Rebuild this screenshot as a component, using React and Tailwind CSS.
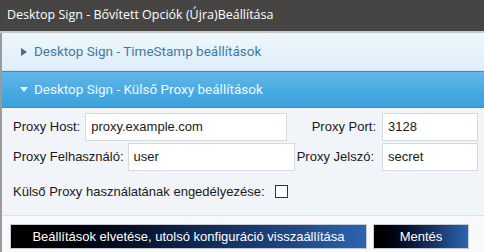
import React from "react";

export default function App() {
  const label = "text-[13px] text-[#1a1a1a] whitespace-nowrap";
  const input =
    "h-[28px] border border-[#d6d9dd] bg-white px-[5px] text-[13px] text-[#1a1a1a] flex items-center";
  return (
    <div className="w-[484px] h-[252px] bg-[#f7f9fb] overflow-hidden flex flex-col" style={{ fontFamily: '"Liberation Sans", Arial, sans-serif' }}>
      <div className="h-[31px] bg-[#474543] flex items-center px-[7px] text-white text-[12.5px] shrink-0" style={{ fontFamily: '"Open Sans", "Noto Sans", sans-serif' }}>
        Desktop Sign - Bővített Opciók (Újra)Beállítása
      </div>
      <div className="h-[2px] bg-[#c9c9c9] shrink-0" />
      <div className="flex flex-col border-l-2 border-[#9a9a9a] ml-0 shrink-0">
        <div className="h-[38px] bg-gradient-to-b from-[#eef7fd] to-[#deeefa] border-b border-[#cfe3f3] flex items-center pl-[19px] shrink-0" style={{ fontFamily: 'Roboto, "Open Sans", sans-serif' }}>
          <svg width="6" height="8" viewBox="0 0 6 8" className="mr-[7px]"><path d="M0 0 L6 4 L0 8 Z" fill="#4d6a86" /></svg>
          <span className="text-[13.5px] text-[#4079a5]">Desktop Sign - TimeStamp beállítások</span>
        </div>
        <div className="h-[37px] bg-gradient-to-b from-[#62b8e8] via-[#4aabe3] to-[#3ba0dc] border-y border-[#3a8ccc] flex items-center pl-[18px] shrink-0" style={{ fontFamily: 'Roboto, "Open Sans", sans-serif' }}>
          <svg width="8" height="6" viewBox="0 0 8 6" className="mr-[6px]"><path d="M0 0 L8 0 L4 5 Z" fill="#eaf6ff" /></svg>
          <span className="text-[13.5px] text-[#eef8ff]">Desktop Sign - Külső Proxy beállítások</span>
        </div>
        <div className="h-[108px] bg-[#f1f4f8] border-b border-[#dfe3e7] pl-[11px] pr-[6px] pt-[5px] flex flex-col gap-[2px]">
          <div className="flex items-center">
            <span className={label}>Proxy Host:</span>
            <div className={`${input} ml-[5px] w-[202px]`}>proxy.example.com</div>
            <span className={`${label} ml-auto mr-[6px]`}>Proxy Port:</span>
            <div className={`${input} w-[96px]`}>3128</div>
          </div>
          <div className="flex items-center">
            <span className={label}>Proxy Felhasználó:</span>
            <div className={`${input} ml-[4px] w-[167px]`}>user</div>
            <span className={`${label} ml-auto mr-[8px]`}>Proxy Jelszó:</span>
            <div className={`${input} w-[96px]`}>secret</div>
          </div>
          <div className="flex items-center mt-[9px]">
            <span className={label}>Külső Proxy használatának engedélyezése:</span>
            <div className="w-[13px] h-[13px] border border-[#333] bg-white ml-[10px]" />
          </div>
        </div>
      </div>
      <div className="flex-1 border-l-2 border-[#9a9a9a] flex items-start pt-[8px] pl-[8px] gap-[6px] bg-[#f7f9fb]">
        <div className="h-[25px] w-[357px] border border-[#c8ccd2] bg-gradient-to-r from-[#000000] via-[#10244a] to-[#2c64b0] text-white text-[13px] flex items-center justify-center">
          Beállítások elvetése, utolsó konfiguráció visszaállítása
        </div>
        <div className="h-[25px] w-[96px] border border-[#c8ccd2] bg-gradient-to-r from-[#000000] via-[#10244a] to-[#2c64b0] text-white text-[13px] flex items-center justify-center">
          Mentés
        </div>
      </div>
    </div>
  );
}
